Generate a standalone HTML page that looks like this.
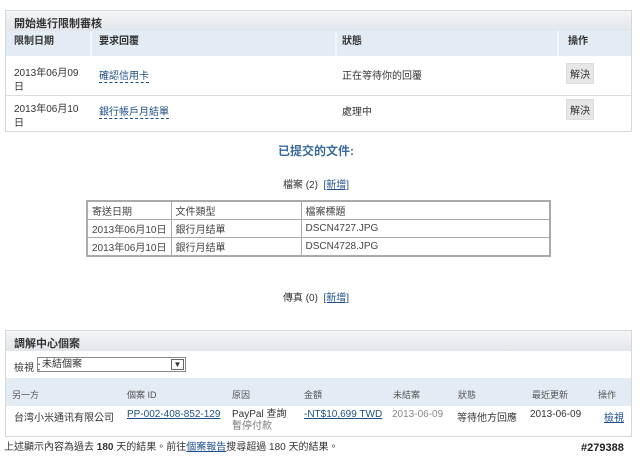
<!DOCTYPE html>
<html><head><meta charset="utf-8"><style>
*{margin:0;padding:0;box-sizing:border-box}
body{width:640px;height:457px;background:#fff;position:relative;overflow:hidden;font-family:"Liberation Sans","Noto Sans CJK TC",sans-serif;font-size:10px;color:#333}
.a{position:absolute;white-space:nowrap}
.box{position:absolute;left:5px;width:627px;border:1px solid #d4d8dd;background:#fff}
.hd{position:absolute;left:0;right:0;height:20px;background:linear-gradient(#f4f5f7,#e2e5ea);font-weight:bold;font-size:11px;padding:4px 8px;color:#333}
.lk{color:#1d4f86;border-bottom:1px dashed #1d4f86}
.ul{color:#1d4f86;text-decoration:underline}
.btn{position:absolute;background:#e6e6e6;border:1px solid #ddd;font-size:10px;padding:2px 3px}
table{border-collapse:collapse;position:absolute}
td{border:1px solid #aaa;padding:1px 4px;height:17px;font-size:10px;color:#444}
</style></head><body>
<div class="box" style="top:10px;height:122px">
 <div class="hd" style="top:0">開始進行限制審核</div>
 <div style="position:absolute;top:20px;left:0;right:0;height:25px;background:#e3ebf4"></div>
 <div style="position:absolute;top:20px;left:84px;width:2px;height:25px;background:#f3f6fa"></div>
 <div style="position:absolute;top:20px;left:329px;width:2px;height:25px;background:#f3f6fa"></div>
 <div style="position:absolute;top:20px;left:551px;width:2px;height:25px;background:#f3f6fa"></div>
 <div class="a" style="left:8px;top:21px;font-weight:bold">限制日期</div>
 <div class="a" style="left:93px;top:21px;font-weight:bold">要求回覆</div>
 <div class="a" style="left:336px;top:21px;font-weight:bold">狀態</div>
 <div class="a" style="left:562px;top:21px;font-weight:bold">操作</div>
 <div class="a" style="left:8px;top:56px;line-height:14px">2013年06月09<br>日</div>
 <div class="a lk" style="left:93px;top:56px">確認信用卡</div>
 <div class="a" style="left:336px;top:56px">正在等待你的回覆</div>
 <div class="btn" style="left:560px;top:52px">解決</div>
 <div style="position:absolute;top:84px;left:0;right:0;height:1px;background:#ddd"></div>
 <div class="a" style="left:8px;top:92px;line-height:14px">2013年06月10<br>日</div>
 <div class="a lk" style="left:93px;top:92px">銀行帳戶月結單</div>
 <div class="a" style="left:336px;top:92px">處理中</div>
 <div class="btn" style="left:560px;top:88px">解決</div>
</div>
<div class="a" style="left:0;width:632px;text-align:center;top:142px;font-size:12px;color:#3a6a9a;font-weight:bold">已提交的文件:</div>
<div class="a" style="left:0;width:632px;text-align:center;top:176px">檔案 (2)&nbsp;&nbsp;<span class="ul">[新增]</span></div>
<table style="left:86px;top:200px;width:465px;border:2px solid #aaa">
<tr><td style="width:84px">寄送日期</td><td style="width:130px">文件類型</td><td>檔案標題</td></tr>
<tr><td>2013年06月10日</td><td>銀行月结單</td><td>DSCN4727.JPG</td></tr>
<tr><td>2013年06月10日</td><td>銀行月结單</td><td>DSCN4728.JPG</td></tr>
</table>
<div class="a" style="left:0;width:632px;text-align:center;top:289px">傳真 (0)&nbsp;&nbsp;<span class="ul">[新增]</span></div>
<div class="box" style="top:330px;height:107px">
 <div class="hd" style="top:0">調解中心個案</div>
 <div class="a" style="left:8px;top:28px">檢視：</div>
 <div style="position:absolute;left:31px;top:26px;width:149px;height:15px;border:1px solid #888;padding:1px 4px;line-height:11px">未結個案<span style="position:absolute;right:1px;top:1px;width:13px;height:11px;border:1px solid #666;font-size:8px;text-align:center;line-height:10px">▼</span></div>
 <div style="position:absolute;top:47px;left:0;right:0;height:28px;background:#e3ebf4"></div>
 <div class="a" style="left:6px;top:57px;font-size:9px;color:#555">另一方</div>
 <div class="a" style="left:121px;top:57px;font-size:9px;color:#555">個案 ID</div>
 <div class="a" style="left:226px;top:57px;font-size:9px;color:#555">原因</div>
 <div class="a" style="left:298px;top:57px;font-size:9px;color:#555">金額</div>
 <div class="a" style="left:387px;top:57px;font-size:9px;color:#555">未結案</div>
 <div class="a" style="left:452px;top:57px;font-size:9px;color:#555">狀態</div>
 <div class="a" style="left:526px;top:57px;font-size:9px;color:#555">最近更新</div>
 <div class="a" style="left:592px;top:57px;font-size:9px;color:#555">操作</div>
 <div class="a" style="left:8px;top:78px">台湾小米通讯有限公司</div>
 <div class="a ul" style="left:121px;top:78px">PP-002-408-852-129</div>
 <div class="a" style="left:226px;top:78px;line-height:12px">PayPal 查詢<br><span style="color:#777">暫停付款</span></div>
 <div class="a ul" style="left:298px;top:78px">-NT$10,699 TWD</div>
 <div class="a" style="left:386px;top:78px;color:#888">2013-06-09</div>
 <div class="a" style="left:451px;top:78px">等待他方回應</div>
 <div class="a" style="left:524px;top:78px">2013-06-09</div>
 <div class="a ul" style="left:598px;top:78px">檢視</div>
</div>
<div class="a" style="left:4px;top:438px">上述顯示內容為過去 <b>180</b> 天的結果。前往<span class="ul">個案報告</span>搜尋超過 180 天的結果。</div>
<div class="a" style="left:581px;top:442px;font-weight:bold;font-size:11px;color:#222">#279388</div>
</body></html>
